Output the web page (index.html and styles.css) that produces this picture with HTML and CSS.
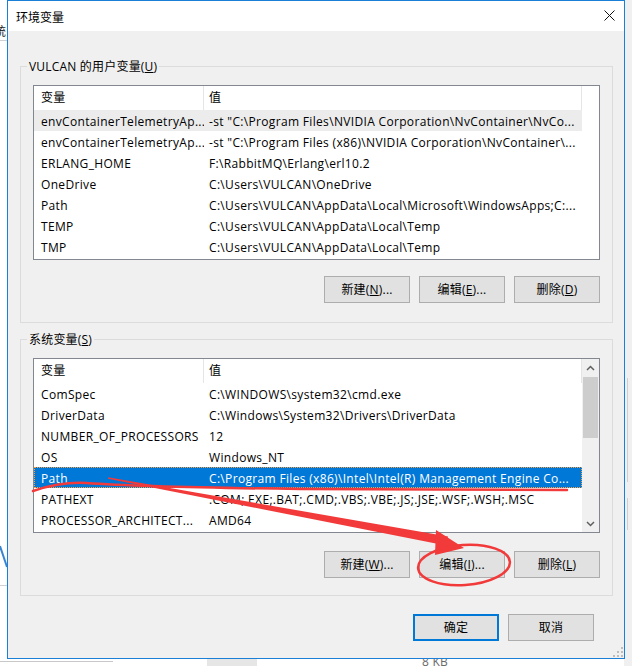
FILE: index.html
```html
<!DOCTYPE html>
<html lang="zh-CN">
<head>
<meta charset="utf-8">
<title>环境变量</title>
<link rel="stylesheet" href="styles.css">
</head>
<body>
<div class="desktop">
  <div class="bg-right"><i class="rl rl1"></i><i class="rl rl2"></i></div>
  <div class="bg-char">统</div>
  <i class="bg-line bl1"></i>
  <i class="bg-line bl2"></i>
  <svg class="bg-v" width="8" height="24" viewBox="0 0 8 24"><path d="M0 1 L7 22" stroke="#3a84cf" stroke-width="2" fill="none"/></svg>
  <i class="bg-bottom-line"></i>
  <i class="bg-bottom-block"></i>
  <div class="bg-kb">8 KB</div>

  <div class="dialog">
    <div class="titlebar">
      <span class="title">环境变量</span>
      <svg class="close" width="11" height="11" viewBox="0 0 11 11"><path d="M0.5 0.5 L10.5 10.5 M10.5 0.5 L0.5 10.5" stroke="#111" stroke-width="1" fill="none"/></svg>
    </div>
    <div class="client">
      <div class="group g1">
        <div class="legend">VULCAN 的用户变量(<u>U</u>)</div>
        <div class="list">
          <div class="cols">
            <div class="hdr"><div class="c1">变量</div><div class="c2">值</div></div>
            <div class="row hot"><div class="c1">envContainerTelemetryAp...</div><div class="c2">-st "C:\Program Files\NVIDIA Corporation\NvContainer\NvCo...</div></div>
            <div class="row"><div class="c1">envContainerTelemetryAp...</div><div class="c2">-st "C:\Program Files (x86)\NVIDIA Corporation\NvContainer\...</div></div>
            <div class="row"><div class="c1">ERLANG_HOME</div><div class="c2">F:\RabbitMQ\Erlang\erl10.2</div></div>
            <div class="row"><div class="c1">OneDrive</div><div class="c2">C:\Users\VULCAN\OneDrive</div></div>
            <div class="row"><div class="c1">Path</div><div class="c2">C:\Users\VULCAN\AppData\Local\Microsoft\WindowsApps;C:...</div></div>
            <div class="row"><div class="c1">TEMP</div><div class="c2">C:\Users\VULCAN\AppData\Local\Temp</div></div>
            <div class="row"><div class="c1">TMP</div><div class="c2">C:\Users\VULCAN\AppData\Local\Temp</div></div>
          </div>
        </div>
        <div class="btns">
          <button class="btn">新建(<u>N</u>)...</button>
          <button class="btn">编辑(<u>E</u>)...</button>
          <button class="btn">删除(<u>D</u>)</button>
        </div>
      </div>

      <div class="group g2">
        <div class="legend">系统变量(<u>S</u>)</div>
        <div class="list">
          <div class="cols">
            <div class="hdr"><div class="c1">变量</div><div class="c2">值</div></div>
            <div class="row"><div class="c1">ComSpec</div><div class="c2">C:\WINDOWS\system32\cmd.exe</div></div>
            <div class="row"><div class="c1">DriverData</div><div class="c2">C:\Windows\System32\Drivers\DriverData</div></div>
            <div class="row"><div class="c1">NUMBER_OF_PROCESSORS</div><div class="c2">12</div></div>
            <div class="row"><div class="c1">OS</div><div class="c2">Windows_NT</div></div>
            <div class="row sel"><div class="c1">Path</div><div class="c2">C:\Program Files (x86)\Intel\Intel(R) Management Engine Co...</div></div>
            <div class="row"><div class="c1">PATHEXT</div><div class="c2">.COM;.EXE;.BAT;.CMD;.VBS;.VBE;.JS;.JSE;.WSF;.WSH;.MSC</div></div>
            <div class="row"><div class="c1">PROCESSOR_ARCHITECT...</div><div class="c2">AMD64</div></div>
          </div>
          <div class="vscroll">
            <div class="arrow"><svg width="9" height="6" viewBox="0 0 9 6"><path d="M1 5 L4.5 1.5 L8 5" stroke="#606060" stroke-width="1.5" fill="none"/></svg></div>
            <div class="thumb"></div>
            <div class="track"></div>
            <div class="arrow"><svg width="9" height="6" viewBox="0 0 9 6"><path d="M1 1 L4.5 4.5 L8 1" stroke="#606060" stroke-width="1.5" fill="none"/></svg></div>
          </div>
        </div>
        <div class="btns">
          <button class="btn">新建(<u>W</u>)...</button>
          <button class="btn">编辑(<u>I</u>)...</button>
          <button class="btn">删除(<u>L</u>)</button>
        </div>
      </div>

      <div class="footer">
        <button class="btn default">确定</button>
        <button class="btn">取消</button>
      </div>
    </div>
    <svg class="grip" width="10" height="10" viewBox="0 0 10 10">
      <rect x="8" y="0" width="2" height="2" fill="#bdbdbd"/>
      <rect x="4" y="4" width="2" height="2" fill="#bdbdbd"/>
      <rect x="8" y="4" width="2" height="2" fill="#bdbdbd"/>
      <rect x="0" y="8" width="2" height="2" fill="#bdbdbd"/>
      <rect x="4" y="8" width="2" height="2" fill="#bdbdbd"/>
      <rect x="8" y="8" width="2" height="2" fill="#bdbdbd"/>
    </svg>
  </div>

  <svg class="annot" width="632" height="666" viewBox="0 0 632 666">
    <path d="M33 491 C45 487 65 482 86 483 C130 486 220 488 300 489 L567 490" stroke="#f23a3a" stroke-width="2.5" fill="none" stroke-linecap="round"/>
    <polygon points="108,477.3 448,536.5 446,545.5 108,478.7" fill="#f23a3a"/>
    <polygon points="436,530 464,548 435,555" fill="#f23a3a"/>
    <ellipse cx="464" cy="565" rx="46" ry="20" transform="rotate(-4 464 565)" stroke="#f23a3a" stroke-width="2.5" fill="none"/>
  </svg>
</div>
</body>
</html>
```

FILE: styles.css
```css
* { box-sizing: border-box; }

html, body {
  margin: 0;
  padding: 0;
}

body {
  width: 632px;
  height: 666px;
  overflow: hidden;
  background: #ffffff;
  font-family: "Open Sans", "Noto Sans CJK SC", sans-serif;
  font-size: 12px;
  letter-spacing: 0.2px;
  color: #000;
}

.desktop {
  position: relative;
  width: 632px;
  height: 666px;
  overflow: hidden;
  background: #ffffff;
}

/* ---- background window fragments ---- */
.bg-right {
  position: absolute;
  left: 624px;
  top: 0;
  width: 8px;
  height: 666px;
  background: #f0f0f0;
}
.rl {
  position: absolute;
  left: 3px;
  width: 1px;
  background: #cfcfcf;
}
.rl1 { top: 378px; height: 104px; }
.rl2 { top: 498px; height: 32px; }

.bg-char {
  position: absolute;
  left: -6px;
  top: 24px;
  font-family: "Noto Sans CJK SC", sans-serif;
  font-size: 12px;
  line-height: 14px;
  color: #222;
}
.bg-line {
  position: absolute;
  left: 0;
  width: 7px;
  height: 1px;
  background: #d0d0d0;
}
.bl1 { top: 40px; }
.bl2 { top: 585px; }
.bg-v {
  position: absolute;
  left: 0;
  top: 545px;
}
.bg-bottom-line {
  position: absolute;
  left: 0;
  top: 661px;
  width: 113px;
  height: 1px;
  background: #c8c8c8;
}
.bg-bottom-block {
  position: absolute;
  left: 207px;
  top: 659px;
  width: 50px;
  height: 7px;
  background: #e6e6e6;
}
.bg-kb {
  position: absolute;
  left: 422px;
  top: 655px;
  font-size: 12px;
  line-height: 14px;
  color: #6a6a6a;
}

/* ---- dialog ---- */
.dialog {
  position: absolute;
  left: 7px;
  top: 0;
  width: 618px;
  height: 659px;
  border: 1px solid #1a7fd6;
  background: #f0f0f0;
  display: flex;
  flex-direction: column;
}

.titlebar {
  flex: none;
  height: 30px;
  background: #ffffff;
  display: flex;
  align-items: center;
  justify-content: space-between;
  padding: 0 9px 0 8px;
}
.title {
  font-family: "Noto Sans CJK SC", sans-serif;
  font-size: 12px;
  line-height: 16px;
  margin-top: 1px;
  letter-spacing: 0;
}
.close {
  display: block;
  margin-top: -1px;
}

.client {
  flex: 1;
  padding: 35px 11px 0 12px;
}

.group {
  border: 1px solid #dcdcdc;
  padding: 0 12px;
}
.g1 { padding-bottom: 19px; }
.g2 { margin-top: 16px; padding-bottom: 17px; }

.legend {
  width: max-content;
  height: 17px;
  line-height: 17px;
  margin: -9px 0 0 -6px;
  padding: 0 2px;
  background: #f0f0f0;
  white-space: nowrap;
}

u { text-decoration: underline; text-underline-offset: 1px; }

.list {
  margin-top: 10px;
  height: 175px;
  border: 1px solid #828790;
  background: #ffffff;
  display: flex;
  overflow: hidden;
}

.cols {
  width: 548px;
  flex: none;
}

.hdr {
  display: flex;
  height: 24px;
  line-height: 24px;
}
.hdr .c1 {
  width: 170px;
  padding-left: 7px;
  border-right: 1px solid #e5e5e5;
}
.hdr .c2 {
  width: 378px;
  padding-left: 5px;
  border-right: 1px solid #e5e5e5;
}

.row {
  display: flex;
  height: 21px;
  line-height: 21px;
  white-space: nowrap;
  letter-spacing: 0.33px;
}
.row .c1 {
  width: 170px;
  padding: 1px 0 0 7px;
  overflow: hidden;
}
.row .c2 {
  width: 378px;
  padding: 1px 0 0 5px;
  overflow: hidden;
}
.row.hot { background: #ececec; }
.row.sel {
  background: #0078d7;
  color: #ffffff;
  outline: 1px dotted #ffa040;
  outline-offset: -1px;
}

.vscroll {
  width: 17px;
  flex: none;
  background: #f0f0f0;
  display: flex;
  flex-direction: column;
}
.arrow {
  height: 17px;
  flex: none;
  display: flex;
  align-items: center;
  justify-content: center;
}
.arrow svg { display: block; }
.thumb {
  height: 61px;
  margin: 1px 1px 0;
  background: #cdcdcd;
  flex: none;
}
.track { flex: 1; }

.btns {
  display: flex;
  justify-content: flex-end;
  gap: 9px;
  margin-top: 16px;
}
.g2 .btns { margin-top: 18px; }

.btn {
  width: 86px;
  height: 27px;
  padding: 0;
  margin: 0;
  border: 1px solid #adadad;
  background: #e1e1e1;
  font-family: "Open Sans", "Noto Sans CJK SC", sans-serif;
  font-size: 12px;
  letter-spacing: 0.2px;
  line-height: 24px;
  color: #000;
  white-space: nowrap;
}
.btn.default {
  border: 2px solid #0078d7;
}

.footer {
  display: flex;
  justify-content: flex-end;
  gap: 9px;
  margin-top: 18px;
  padding-right: 19px;
}

.grip {
  position: absolute;
  right: 1px;
  bottom: 1px;
}

.annot {
  position: absolute;
  left: 0;
  top: 0;
  pointer-events: none;
}
```
